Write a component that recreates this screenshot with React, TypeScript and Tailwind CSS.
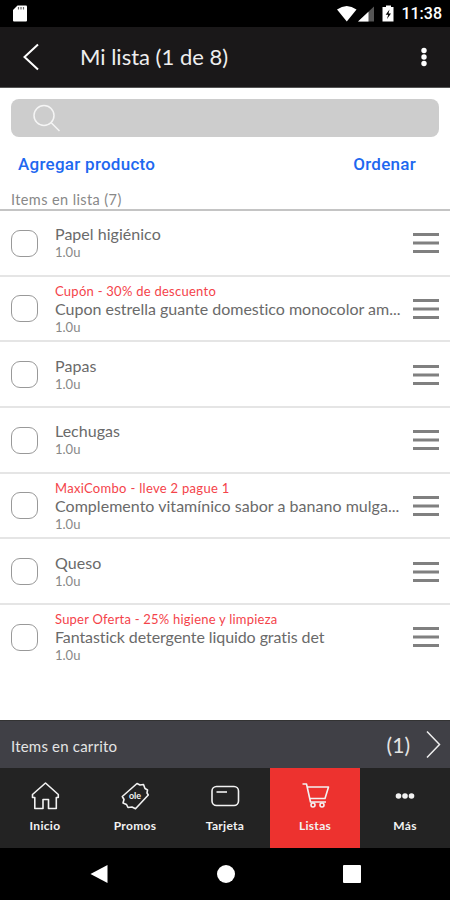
import type { ReactNode } from 'react';

type Item = {
  name: string;
  nameClass: string;
  promo?: string;
  promoClass?: string;
};

const items: Item[] = [
  { name: 'Papel higiénico', nameClass: 'tracking-[0.03px]' },
  {
    name: 'Cupon estrella guante domestico monocolor am...',
    nameClass: 'tracking-[-0.01px]',
    promo: 'Cupón - 30% de descuento',
    promoClass: 'tracking-[0.26px]',
  },
  { name: 'Papas', nameClass: 'tracking-[0.05px]' },
  { name: 'Lechugas', nameClass: 'tracking-[0.02px]' },
  {
    name: 'Complemento vitamínico sabor a banano mulga...',
    nameClass: 'tracking-[0.03px]',
    promo: 'MaxiCombo - lleve 2 pague 1',
    promoClass: 'tracking-[0.3px]',
  },
  { name: 'Queso', nameClass: 'tracking-[0.05px]' },
  {
    name: 'Fantastick detergente liquido gratis det',
    nameClass: 'tracking-[-0.08px]',
    promo: 'Super Oferta - 25% higiene y limpieza',
    promoClass: 'tracking-[0.22px]',
  },
];

function StatusBar() {
  return (
    <div className="flex h-[27px] shrink-0 items-center bg-black pl-[13px] pr-2 text-white">
      <svg width="14" height="17" viewBox="0 0 14 17">
        <path d="M4.5 0.5H13a1 1 0 0 1 1 1V15.5a1 1 0 0 1-1 1H1a1 1 0 0 1-1-1V5z" fill="#fff" />
        <path d="M5.5 2v2.5M8 2v2.5M10.5 2v2.5" stroke="#666" strokeWidth="1.2" />
      </svg>
      <svg className="ml-auto" width="58" height="18" viewBox="0 0 58 18">
        <path d="M0 4.5Q9.7-2.5 19.5 4.5L9.8 16.5z" fill="#fff" />
        <path d="M37 1.5V16.5H21z" fill="#555" />
        <path d="M31.5 6.7V16.5H21z" fill="#fff" />
        <path d="M49 0.5h5v1.5h2.5v14.5h-11V2H49z" fill="#fff" />
        <path d="M52.5 4.5L48.7 9.7h2.5L50 14l4-5.5h-2.5z" fill="#000" />
      </svg>
      <span className="ml-[6px] mt-px font-['Roboto','sans-serif'] text-[16px] font-medium leading-none">11:38</span>
    </div>
  );
}

function Header() {
  return (
    <header className="flex h-[61px] shrink-0 items-center border-b border-[#555] bg-[#1a1819] pl-[23px] pr-[23px]">
      <svg width="16" height="28" viewBox="0 0 16 28" fill="none" stroke="#fff" strokeWidth="2">
        <path d="M15 1.5L1.5 14L15 26.5" />
      </svg>
      <h1 className="ml-[41px] text-[22px] leading-none text-[#eee]">Mi lista (1 de 8)</h1>
      <svg className="ml-auto" width="6" height="20" viewBox="0 0 6 20" fill="#fff">
        <circle cx="3" cy="3.5" r="2.7" />
        <circle cx="3" cy="10" r="2.7" />
        <circle cx="3" cy="16.5" r="2.7" />
      </svg>
    </header>
  );
}

function Toolbar() {
  return (
    <div className="flex h-[123px] shrink-0 flex-col border-b-2 border-[#c4c4c4] pt-[11px]">
      <div className="mx-[11px] flex h-[38px] shrink-0 items-center rounded-lg bg-[#cdcdcd] pl-[21px]">
        <svg width="29" height="29" viewBox="0 0 29 29" fill="none" stroke="#f5f5f5" strokeWidth="1.5">
          <circle cx="12" cy="11.5" r="10" />
          <path d="M19 18.5L27.5 27" />
        </svg>
      </div>
      <div className="mt-[17px] flex justify-between pl-[18px] pr-[34px] font-['Roboto','sans-serif'] text-[17px] font-medium leading-5 tracking-[0.27px] text-[#1e68f0]">
        <button type="button">Agregar producto</button>
        <button type="button">Ordenar</button>
      </div>
      <p className="mt-[17px] pl-[11px] text-[14.5px] leading-[18px] tracking-[0.4px] text-[#888]">Items en lista (7)</p>
    </div>
  );
}

function ListRow({ item }: { item: Item }) {
  return (
    <li className="flex h-[65.67px] items-center border-b-2 border-[#e5e5e5] pt-[1px] pl-[11px] pr-[11px] last:border-transparent">
      <span className="h-[27px] w-[27px] shrink-0 rounded-[9px] border border-[#999]" />
      <div className="ml-[17px] min-w-0 flex-1 whitespace-nowrap text-[#6a6a6a]">
        {item.promo && (
          <p className={`text-[13px] leading-[18px] text-[#f4434a] ${item.promoClass}`}>{item.promo}</p>
        )}
        <p className={`text-[16px] leading-[18px] ${item.nameClass}`}>{item.name}</p>
        <p className="text-[13px] leading-[18px] text-[#888]">1.0u</p>
      </div>
      <svg className="shrink-0" width="26" height="22" viewBox="0 0 26 22" stroke="#808080" strokeWidth="3">
        <path d="M0 2.5H26M0 11H26M0 19.5H26" />
      </svg>
    </li>
  );
}

function CartBar() {
  return (
    <div className="flex h-[48px] shrink-0 items-center border-t border-[#333] bg-[#404046] pl-[11px] pr-[9px] text-[#e4e4e4]">
      <span className="mt-[4px] text-[15px] leading-none tracking-[0.2px]">Items en carrito</span>
      <span className="ml-auto text-[21px] leading-none">(1)</span>
      <svg className="ml-[16px]" width="15" height="28" viewBox="0 0 15 28" fill="none" stroke="#eee" strokeWidth="1.5">
        <path d="M1 0.5L13.5 13.5L1 26.5" />
      </svg>
    </div>
  );
}

function Tab({ label, active, children }: { label: string; active?: boolean; children: ReactNode }) {
  return (
    <button
      type="button"
      className={`flex flex-1 flex-col items-center pt-[12px] text-[#f2f2f2] ${active ? 'bg-[#ed322f]' : 'bg-[#232323]'}`}
    >
      <svg width="30" height="30" viewBox="0 0 30 30" fill="none" stroke="currentColor" strokeWidth="1.6" strokeLinejoin="round">
        {children}
      </svg>
      <span className="mt-[8px] text-[12px] font-bold leading-4 tracking-[0.3px]">{label}</span>
    </button>
  );
}

function TabBar() {
  return (
    <nav className="flex h-[80px] shrink-0">
      <Tab label="Inicio">
        <path d="M15.5 3L28.3 14.500V17.500H26.300V28.500H18.500V19.500H13V28.500H4.800V17.500H2.500V14.500z" />
      </Tab>
      <Tab label="Promos">
        <path d="M17 3.5L20 5L23.5 4.500L25 8.500L27.500 10L27 13L28.300 15L15.500 28.700L12 27L8 27.500L6.500 24.500L3 23L4 19.500L2.300 16.500z" />
        <text x="15" y="18.500" textAnchor="middle" fontSize="9" fontWeight="700" fill="currentColor" stroke="none">ole</text>
      </Tab>
      <Tab label="Tarjeta">
        <rect x="2" y="6.5" width="26.5" height="19" rx="4.5" />
        <path d="M6.5 12H17" />
      </Tab>
      <Tab label="Listas" active>
        <path d="M2.5 4H6.5L10.5 22H26M7.500 7H28.5L25 18.500H10" />
        <circle cx="13" cy="25" r="2" />
        <circle cx="22" cy="25" r="2" />
      </Tab>
      <Tab label="Más">
        <g fill="currentColor" stroke="none">
          <circle cx="8.5" cy="16" r="2.8" />
          <circle cx="15" cy="16" r="2.8" />
          <circle cx="21.5" cy="16" r="2.8" />
        </g>
      </Tab>
    </nav>
  );
}

function SystemNav() {
  return (
    <div className="flex h-[52px] shrink-0 items-center justify-between bg-black pl-[90px] pr-[89px]">
      <svg width="18" height="18" viewBox="0 0 18 18">
        <path d="M17.5 0V18L0.5 9z" fill="#fff" />
      </svg>
      <span className="h-[18px] w-[18px] rounded-full bg-white" />
      <span className="h-[18px] w-[18px] rounded-[1px] bg-white" />
    </div>
  );
}

export default function App() {
  return (
    <div className="flex h-[900px] w-[450px] flex-col overflow-hidden bg-white font-['Lato','sans-serif']">
      <StatusBar />
      <Header />
      <Toolbar />
      <ul className="min-h-0 flex-1">
        {items.map((item) => (
          <ListRow key={item.name} item={item} />
        ))}
      </ul>
      <CartBar />
      <TabBar />
      <SystemNav />
    </div>
  );
}
